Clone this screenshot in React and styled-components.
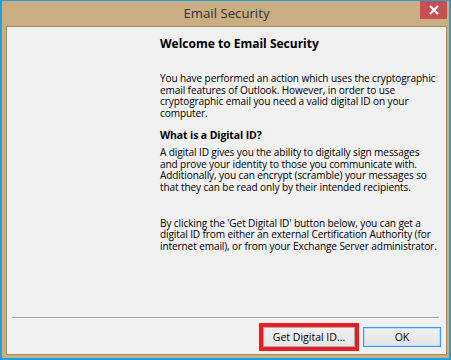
import React from 'react';
import styled, { createGlobalStyle } from 'styled-components';

// --> Styled components start <--
const GlobalStyle = createGlobalStyle`
    html, body {
        margin: 0;
        padding: 0;
        background: #ffffff;
    }
    * {
        box-sizing: border-box;
    }
`;

// outer window frame, blue edge around a tan frame
const Window = styled.div`
    width: 451px;
    height: 360px;
    display: flex;
    flex-direction: column;
    background: #caad82;
    border-style: solid;
    border-color: #1ba1e2;
    border-width: 1px 2px 2px 2px;
    padding: 0 2px 3px 4px;
    font-family: 'Open Sans', 'Noto Sans', sans-serif;
`;

const TitleBar = styled.div`
    height: 25px;
    display: grid;
    grid-template-columns: 1fr auto 1fr;
    align-items: start;
`;

const Title = styled.div`
    grid-column: 2;
    margin-top: 2px;
    font-size: 13.2px;
    line-height: 20px;
    color: #333333;
`;

const CloseButton = styled.div`
    grid-column: 3;
    justify-self: end;
    width: 27px;
    height: 18px;
    background: #c75050;
    display: flex;
    align-items: center;
    justify-content: center;
    svg {
        display: block;
    }
`;

// light dialog body
const Client = styled.div`
    flex: 1;
    display: flex;
    flex-direction: column;
    background: #f0f0f0;
    border: 1px solid #a38a66;
    color: #000000;
`;

const Body = styled.div`
    padding: 10px 0 0 153px;
    font-size: 10.1px;
    letter-spacing: -0.12px;
    line-height: 11.7px;
    white-space: nowrap;
`;

const Heading = styled.div`
    font-weight: 700;
    font-size: ${props => props.big ? '12px' : '10.5px'};
    letter-spacing: ${props => props.big ? '0' : '-0.12px'};
    line-height: 14px;
    margin: ${props => props.big ? '0 0 22px 0' : '8px 0 5px 0'};
`;

const Paragraph = styled.p`
    margin: 0 0 ${props => props.gap || 0}px 0;
`;

const Separator = styled.div`
    margin: auto 7px 0 5px;
    height: 2px;
    border-top: 1px solid #a0a0a0;
    border-bottom: 1px solid #ffffff;
`;

const ButtonRow = styled.div`
    display: flex;
    justify-content: flex-end;
    gap: 8px;
    padding: 8px 5px 7px 0;
`;

const Button = styled.button`
    width: ${props => props.w}px;
    height: 20px;
    padding: 0;
    font-family: inherit;
    font-size: 10.5px;
    color: #000000;
    background: linear-gradient(#f0f0f0, #e5e5e5);
    border: 1px solid ${props => props.primary ? '#3399ff' : '#acacac'};
    box-shadow: ${props => props.highlight
        ? '0 0 0 4px #ed1c24'
        : props.primary ? 'inset 0 0 0 1px #b9dcff' : 'none'};
`;
// --> Styled components end <--

const App = () => {
    return (
        <>
            <GlobalStyle />
            <Window>
                <TitleBar>
                    <Title>Email Security</Title>
                    <CloseButton>
                        <svg width="10" height="10" viewBox="0 0 10 10">
                            <path d="M1 1 L9 9 M9 1 L1 9" stroke="#ffffff" strokeWidth="2.2" />
                        </svg>
                    </CloseButton>
                </TitleBar>
                <Client>
                    <Body>
                        <Heading big>Welcome to Email Security</Heading>
                        <Paragraph>
                            You have performed an action which uses the cryptographic<br />
                            email features of Outlook. However, in order to use<br />
                            cryptographic email you need a valid digital ID on your<br />
                            computer.
                        </Paragraph>
                        <Heading>What is a Digital ID?</Heading>
                        <Paragraph gap={24}>
                            A digital ID gives you the ability to digitally sign messages<br />
                            and prove your identity to those you communicate with.<br />
                            Additionally, you can encrypt (scramble) your messages so<br />
                            that they can be read only by their intended recipients.
                        </Paragraph>
                        <Paragraph>
                            By clicking the 'Get Digital ID' button below, you can get a<br />
                            digital ID from either an external Certification Authority (for<br />
                            internet email), or from your Exchange Server administrator.
                        </Paragraph>
                    </Body>
                    <Separator />
                    <ButtonRow>
                        <Button w={92} highlight>Get Digital ID...</Button>
                        <Button w={78} primary>OK</Button>
                    </ButtonRow>
                </Client>
            </Window>
        </>
    );
};

export default App;
